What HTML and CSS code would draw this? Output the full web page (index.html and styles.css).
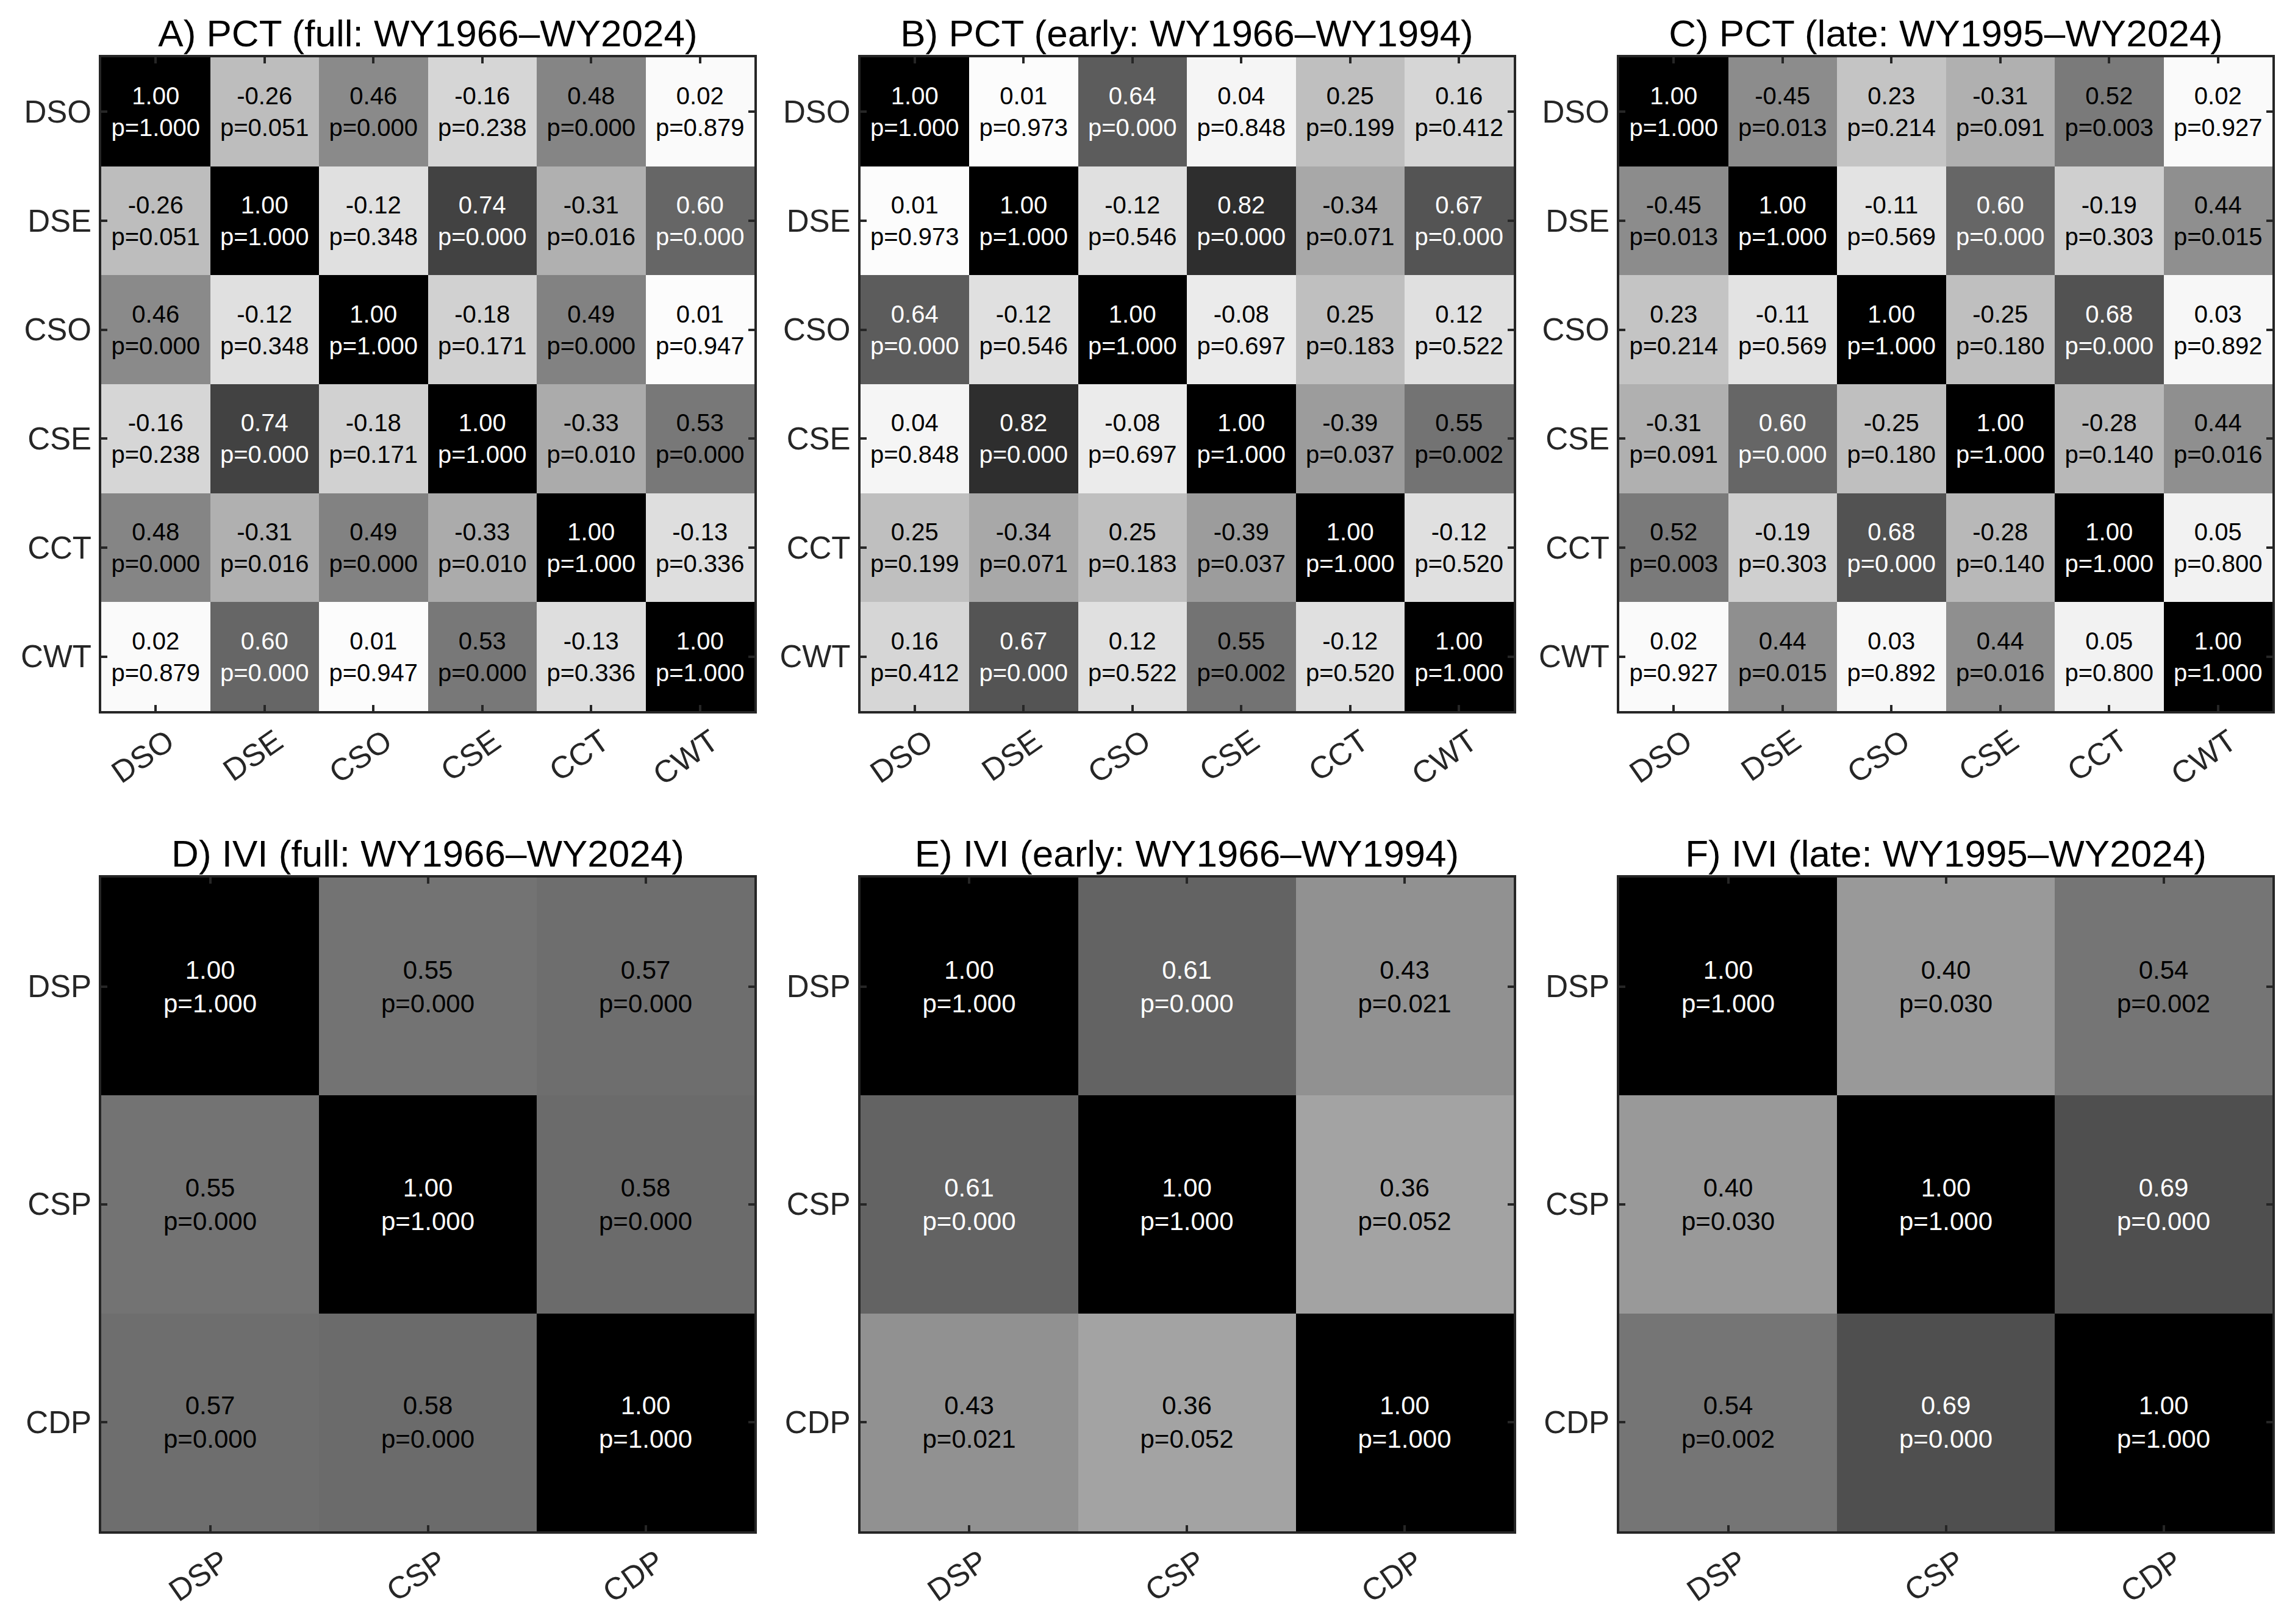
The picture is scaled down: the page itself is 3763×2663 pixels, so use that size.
FILE: index.html
```html
<!DOCTYPE html>
<html lang="en">
<head>
<meta charset="utf-8">
<title>Correlation matrices</title>
<link rel="stylesheet" href="styles.css">
</head>
<body>
<div class="page">

  <!-- A -->
  <section class="panel">
    <h2 class="title">A) PCT (full: WY1966–WY2024)</h2>
    <div class="ylabels"><span>DSO</span><span>DSE</span><span>CSO</span><span>CSE</span><span>CCT</span><span>CWT</span></div>
    <div class="box m6">
      <div class="c w" style="background:#000"><span>1.00</span><span>p=1.000</span></div>
      <div class="c" style="background:#bdbdbd"><span>-0.26</span><span>p=0.051</span></div>
      <div class="c" style="background:#8a8a8a"><span>0.46</span><span>p=0.000</span></div>
      <div class="c" style="background:#d6d6d6"><span>-0.16</span><span>p=0.238</span></div>
      <div class="c" style="background:#858585"><span>0.48</span><span>p=0.000</span></div>
      <div class="c" style="background:#fafafa"><span>0.02</span><span>p=0.879</span></div>

      <div class="c" style="background:#bdbdbd"><span>-0.26</span><span>p=0.051</span></div>
      <div class="c w" style="background:#000"><span>1.00</span><span>p=1.000</span></div>
      <div class="c" style="background:#e0e0e0"><span>-0.12</span><span>p=0.348</span></div>
      <div class="c w" style="background:#424242"><span>0.74</span><span>p=0.000</span></div>
      <div class="c" style="background:#b0b0b0"><span>-0.31</span><span>p=0.016</span></div>
      <div class="c w" style="background:#666666"><span>0.60</span><span>p=0.000</span></div>

      <div class="c" style="background:#8a8a8a"><span>0.46</span><span>p=0.000</span></div>
      <div class="c" style="background:#e0e0e0"><span>-0.12</span><span>p=0.348</span></div>
      <div class="c w" style="background:#000"><span>1.00</span><span>p=1.000</span></div>
      <div class="c" style="background:#d1d1d1"><span>-0.18</span><span>p=0.171</span></div>
      <div class="c" style="background:#828282"><span>0.49</span><span>p=0.000</span></div>
      <div class="c" style="background:#fcfcfc"><span>0.01</span><span>p=0.947</span></div>

      <div class="c" style="background:#d6d6d6"><span>-0.16</span><span>p=0.238</span></div>
      <div class="c w" style="background:#424242"><span>0.74</span><span>p=0.000</span></div>
      <div class="c" style="background:#d1d1d1"><span>-0.18</span><span>p=0.171</span></div>
      <div class="c w" style="background:#000"><span>1.00</span><span>p=1.000</span></div>
      <div class="c" style="background:#ababab"><span>-0.33</span><span>p=0.010</span></div>
      <div class="c" style="background:#787878"><span>0.53</span><span>p=0.000</span></div>

      <div class="c" style="background:#858585"><span>0.48</span><span>p=0.000</span></div>
      <div class="c" style="background:#b0b0b0"><span>-0.31</span><span>p=0.016</span></div>
      <div class="c" style="background:#828282"><span>0.49</span><span>p=0.000</span></div>
      <div class="c" style="background:#ababab"><span>-0.33</span><span>p=0.010</span></div>
      <div class="c w" style="background:#000"><span>1.00</span><span>p=1.000</span></div>
      <div class="c" style="background:#dedede"><span>-0.13</span><span>p=0.336</span></div>

      <div class="c" style="background:#fafafa"><span>0.02</span><span>p=0.879</span></div>
      <div class="c w" style="background:#666666"><span>0.60</span><span>p=0.000</span></div>
      <div class="c" style="background:#fcfcfc"><span>0.01</span><span>p=0.947</span></div>
      <div class="c" style="background:#787878"><span>0.53</span><span>p=0.000</span></div>
      <div class="c" style="background:#dedede"><span>-0.13</span><span>p=0.336</span></div>
      <div class="c w" style="background:#000"><span>1.00</span><span>p=1.000</span></div>
    </div>
    <div class="xlabels">
      <div class="xc"><div class="xa"><span class="xt">DSO</span></div></div>
      <div class="xc"><div class="xa"><span class="xt">DSE</span></div></div>
      <div class="xc"><div class="xa"><span class="xt">CSO</span></div></div>
      <div class="xc"><div class="xa"><span class="xt">CSE</span></div></div>
      <div class="xc"><div class="xa"><span class="xt">CCT</span></div></div>
      <div class="xc"><div class="xa"><span class="xt">CWT</span></div></div>
    </div>
  </section>

  <!-- B -->
  <section class="panel">
    <h2 class="title">B) PCT (early: WY1966–WY1994)</h2>
    <div class="ylabels"><span>DSO</span><span>DSE</span><span>CSO</span><span>CSE</span><span>CCT</span><span>CWT</span></div>
    <div class="box m6">
      <div class="c w" style="background:#000"><span>1.00</span><span>p=1.000</span></div>
      <div class="c" style="background:#fcfcfc"><span>0.01</span><span>p=0.973</span></div>
      <div class="c w" style="background:#5c5c5c"><span>0.64</span><span>p=0.000</span></div>
      <div class="c" style="background:#f5f5f5"><span>0.04</span><span>p=0.848</span></div>
      <div class="c" style="background:#bfbfbf"><span>0.25</span><span>p=0.199</span></div>
      <div class="c" style="background:#d6d6d6"><span>0.16</span><span>p=0.412</span></div>

      <div class="c" style="background:#fcfcfc"><span>0.01</span><span>p=0.973</span></div>
      <div class="c w" style="background:#000"><span>1.00</span><span>p=1.000</span></div>
      <div class="c" style="background:#e0e0e0"><span>-0.12</span><span>p=0.546</span></div>
      <div class="c w" style="background:#2e2e2e"><span>0.82</span><span>p=0.000</span></div>
      <div class="c" style="background:#a8a8a8"><span>-0.34</span><span>p=0.071</span></div>
      <div class="c w" style="background:#545454"><span>0.67</span><span>p=0.000</span></div>

      <div class="c w" style="background:#5c5c5c"><span>0.64</span><span>p=0.000</span></div>
      <div class="c" style="background:#e0e0e0"><span>-0.12</span><span>p=0.546</span></div>
      <div class="c w" style="background:#000"><span>1.00</span><span>p=1.000</span></div>
      <div class="c" style="background:#ebebeb"><span>-0.08</span><span>p=0.697</span></div>
      <div class="c" style="background:#bfbfbf"><span>0.25</span><span>p=0.183</span></div>
      <div class="c" style="background:#e0e0e0"><span>0.12</span><span>p=0.522</span></div>

      <div class="c" style="background:#f5f5f5"><span>0.04</span><span>p=0.848</span></div>
      <div class="c w" style="background:#2e2e2e"><span>0.82</span><span>p=0.000</span></div>
      <div class="c" style="background:#ebebeb"><span>-0.08</span><span>p=0.697</span></div>
      <div class="c w" style="background:#000"><span>1.00</span><span>p=1.000</span></div>
      <div class="c" style="background:#9c9c9c"><span>-0.39</span><span>p=0.037</span></div>
      <div class="c" style="background:#737373"><span>0.55</span><span>p=0.002</span></div>

      <div class="c" style="background:#bfbfbf"><span>0.25</span><span>p=0.199</span></div>
      <div class="c" style="background:#a8a8a8"><span>-0.34</span><span>p=0.071</span></div>
      <div class="c" style="background:#bfbfbf"><span>0.25</span><span>p=0.183</span></div>
      <div class="c" style="background:#9c9c9c"><span>-0.39</span><span>p=0.037</span></div>
      <div class="c w" style="background:#000"><span>1.00</span><span>p=1.000</span></div>
      <div class="c" style="background:#e0e0e0"><span>-0.12</span><span>p=0.520</span></div>

      <div class="c" style="background:#d6d6d6"><span>0.16</span><span>p=0.412</span></div>
      <div class="c w" style="background:#545454"><span>0.67</span><span>p=0.000</span></div>
      <div class="c" style="background:#e0e0e0"><span>0.12</span><span>p=0.522</span></div>
      <div class="c" style="background:#737373"><span>0.55</span><span>p=0.002</span></div>
      <div class="c" style="background:#e0e0e0"><span>-0.12</span><span>p=0.520</span></div>
      <div class="c w" style="background:#000"><span>1.00</span><span>p=1.000</span></div>
    </div>
    <div class="xlabels">
      <div class="xc"><div class="xa"><span class="xt">DSO</span></div></div>
      <div class="xc"><div class="xa"><span class="xt">DSE</span></div></div>
      <div class="xc"><div class="xa"><span class="xt">CSO</span></div></div>
      <div class="xc"><div class="xa"><span class="xt">CSE</span></div></div>
      <div class="xc"><div class="xa"><span class="xt">CCT</span></div></div>
      <div class="xc"><div class="xa"><span class="xt">CWT</span></div></div>
    </div>
  </section>

  <!-- C -->
  <section class="panel">
    <h2 class="title">C) PCT (late: WY1995–WY2024)</h2>
    <div class="ylabels"><span>DSO</span><span>DSE</span><span>CSO</span><span>CSE</span><span>CCT</span><span>CWT</span></div>
    <div class="box m6">
      <div class="c w" style="background:#000"><span>1.00</span><span>p=1.000</span></div>
      <div class="c" style="background:#8c8c8c"><span>-0.45</span><span>p=0.013</span></div>
      <div class="c" style="background:#c4c4c4"><span>0.23</span><span>p=0.214</span></div>
      <div class="c" style="background:#b0b0b0"><span>-0.31</span><span>p=0.091</span></div>
      <div class="c" style="background:#7a7a7a"><span>0.52</span><span>p=0.003</span></div>
      <div class="c" style="background:#fafafa"><span>0.02</span><span>p=0.927</span></div>

      <div class="c" style="background:#8c8c8c"><span>-0.45</span><span>p=0.013</span></div>
      <div class="c w" style="background:#000"><span>1.00</span><span>p=1.000</span></div>
      <div class="c" style="background:#e3e3e3"><span>-0.11</span><span>p=0.569</span></div>
      <div class="c w" style="background:#666666"><span>0.60</span><span>p=0.000</span></div>
      <div class="c" style="background:#cfcfcf"><span>-0.19</span><span>p=0.303</span></div>
      <div class="c" style="background:#8f8f8f"><span>0.44</span><span>p=0.015</span></div>

      <div class="c" style="background:#c4c4c4"><span>0.23</span><span>p=0.214</span></div>
      <div class="c" style="background:#e3e3e3"><span>-0.11</span><span>p=0.569</span></div>
      <div class="c w" style="background:#000"><span>1.00</span><span>p=1.000</span></div>
      <div class="c" style="background:#bfbfbf"><span>-0.25</span><span>p=0.180</span></div>
      <div class="c w" style="background:#525252"><span>0.68</span><span>p=0.000</span></div>
      <div class="c" style="background:#f7f7f7"><span>0.03</span><span>p=0.892</span></div>

      <div class="c" style="background:#b0b0b0"><span>-0.31</span><span>p=0.091</span></div>
      <div class="c w" style="background:#666666"><span>0.60</span><span>p=0.000</span></div>
      <div class="c" style="background:#bfbfbf"><span>-0.25</span><span>p=0.180</span></div>
      <div class="c w" style="background:#000"><span>1.00</span><span>p=1.000</span></div>
      <div class="c" style="background:#b8b8b8"><span>-0.28</span><span>p=0.140</span></div>
      <div class="c" style="background:#8f8f8f"><span>0.44</span><span>p=0.016</span></div>

      <div class="c" style="background:#7a7a7a"><span>0.52</span><span>p=0.003</span></div>
      <div class="c" style="background:#cfcfcf"><span>-0.19</span><span>p=0.303</span></div>
      <div class="c w" style="background:#525252"><span>0.68</span><span>p=0.000</span></div>
      <div class="c" style="background:#b8b8b8"><span>-0.28</span><span>p=0.140</span></div>
      <div class="c w" style="background:#000"><span>1.00</span><span>p=1.000</span></div>
      <div class="c" style="background:#f2f2f2"><span>0.05</span><span>p=0.800</span></div>

      <div class="c" style="background:#fafafa"><span>0.02</span><span>p=0.927</span></div>
      <div class="c" style="background:#8f8f8f"><span>0.44</span><span>p=0.015</span></div>
      <div class="c" style="background:#f7f7f7"><span>0.03</span><span>p=0.892</span></div>
      <div class="c" style="background:#8f8f8f"><span>0.44</span><span>p=0.016</span></div>
      <div class="c" style="background:#f2f2f2"><span>0.05</span><span>p=0.800</span></div>
      <div class="c w" style="background:#000"><span>1.00</span><span>p=1.000</span></div>
    </div>
    <div class="xlabels">
      <div class="xc"><div class="xa"><span class="xt">DSO</span></div></div>
      <div class="xc"><div class="xa"><span class="xt">DSE</span></div></div>
      <div class="xc"><div class="xa"><span class="xt">CSO</span></div></div>
      <div class="xc"><div class="xa"><span class="xt">CSE</span></div></div>
      <div class="xc"><div class="xa"><span class="xt">CCT</span></div></div>
      <div class="xc"><div class="xa"><span class="xt">CWT</span></div></div>
    </div>
  </section>

  <!-- D -->
  <section class="panel">
    <h2 class="title">D) IVI (full: WY1966–WY2024)</h2>
    <div class="ylabels"><span>DSP</span><span>CSP</span><span>CDP</span></div>
    <div class="box m3">
      <div class="c w" style="background:#000"><span>1.00</span><span>p=1.000</span></div>
      <div class="c" style="background:#737373"><span>0.55</span><span>p=0.000</span></div>
      <div class="c" style="background:#6e6e6e"><span>0.57</span><span>p=0.000</span></div>

      <div class="c" style="background:#737373"><span>0.55</span><span>p=0.000</span></div>
      <div class="c w" style="background:#000"><span>1.00</span><span>p=1.000</span></div>
      <div class="c" style="background:#6b6b6b"><span>0.58</span><span>p=0.000</span></div>

      <div class="c" style="background:#6e6e6e"><span>0.57</span><span>p=0.000</span></div>
      <div class="c" style="background:#6b6b6b"><span>0.58</span><span>p=0.000</span></div>
      <div class="c w" style="background:#000"><span>1.00</span><span>p=1.000</span></div>
    </div>
    <div class="xlabels">
      <div class="xc"><div class="xa"><span class="xt">DSP</span></div></div>
      <div class="xc"><div class="xa"><span class="xt">CSP</span></div></div>
      <div class="xc"><div class="xa"><span class="xt">CDP</span></div></div>
    </div>
  </section>

  <!-- E -->
  <section class="panel">
    <h2 class="title">E) IVI (early: WY1966–WY1994)</h2>
    <div class="ylabels"><span>DSP</span><span>CSP</span><span>CDP</span></div>
    <div class="box m3">
      <div class="c w" style="background:#000"><span>1.00</span><span>p=1.000</span></div>
      <div class="c w" style="background:#636363"><span>0.61</span><span>p=0.000</span></div>
      <div class="c" style="background:#919191"><span>0.43</span><span>p=0.021</span></div>

      <div class="c w" style="background:#636363"><span>0.61</span><span>p=0.000</span></div>
      <div class="c w" style="background:#000"><span>1.00</span><span>p=1.000</span></div>
      <div class="c" style="background:#a3a3a3"><span>0.36</span><span>p=0.052</span></div>

      <div class="c" style="background:#919191"><span>0.43</span><span>p=0.021</span></div>
      <div class="c" style="background:#a3a3a3"><span>0.36</span><span>p=0.052</span></div>
      <div class="c w" style="background:#000"><span>1.00</span><span>p=1.000</span></div>
    </div>
    <div class="xlabels">
      <div class="xc"><div class="xa"><span class="xt">DSP</span></div></div>
      <div class="xc"><div class="xa"><span class="xt">CSP</span></div></div>
      <div class="xc"><div class="xa"><span class="xt">CDP</span></div></div>
    </div>
  </section>

  <!-- F -->
  <section class="panel">
    <h2 class="title">F) IVI (late: WY1995–WY2024)</h2>
    <div class="ylabels"><span>DSP</span><span>CSP</span><span>CDP</span></div>
    <div class="box m3">
      <div class="c w" style="background:#000"><span>1.00</span><span>p=1.000</span></div>
      <div class="c" style="background:#999999"><span>0.40</span><span>p=0.030</span></div>
      <div class="c" style="background:#757575"><span>0.54</span><span>p=0.002</span></div>

      <div class="c" style="background:#999999"><span>0.40</span><span>p=0.030</span></div>
      <div class="c w" style="background:#000"><span>1.00</span><span>p=1.000</span></div>
      <div class="c w" style="background:#4f4f4f"><span>0.69</span><span>p=0.000</span></div>

      <div class="c" style="background:#757575"><span>0.54</span><span>p=0.002</span></div>
      <div class="c w" style="background:#4f4f4f"><span>0.69</span><span>p=0.000</span></div>
      <div class="c w" style="background:#000"><span>1.00</span><span>p=1.000</span></div>
    </div>
    <div class="xlabels">
      <div class="xc"><div class="xa"><span class="xt">DSP</span></div></div>
      <div class="xc"><div class="xa"><span class="xt">CSP</span></div></div>
      <div class="xc"><div class="xa"><span class="xt">CDP</span></div></div>
    </div>
  </section>

</div>
</body>
</html>
```

FILE: styles.css
```css
html, body {
  margin: 0;
  padding: 0;
  background: #ffffff;
}

body {
  width: 3763px;
  height: 2663px;
  overflow: hidden;
  font-family: "Liberation Sans", Arial, Helvetica, sans-serif;
}

.page {
  display: grid;
  grid-template-columns: repeat(3, 1241px);
  column-gap: 3.5px;
  padding-top: 20px;
}

.panel {
  display: grid;
  grid-template-columns: 162px 1079px;
  grid-template-rows: 70px 1080px 195px;
}

.title {
  grid-column: 2;
  grid-row: 1;
  margin: 0;
  font-size: 62px;
  font-weight: normal;
  line-height: 70px;
  text-align: center;
  white-space: nowrap;
  color: #000;
}

.ylabels {
  grid-column: 1;
  grid-row: 2;
  display: flex;
  flex-direction: column;
  padding: 4px 12px 4px 0;
  font-size: 51px;
  color: #262626;
}

.ylabels span {
  flex: 1;
  display: flex;
  align-items: center;
  justify-content: flex-end;
  white-space: nowrap;
}

.box {
  grid-column: 2;
  grid-row: 2;
  box-sizing: border-box;
  width: 1079px;
  height: 1080px;
  border: 4px solid #262626;
  display: grid;
}

.m6 {
  grid-template-columns: repeat(6, 1fr);
  grid-template-rows: repeat(6, 1fr);
}

.m3 {
  grid-template-columns: repeat(3, 1fr);
  grid-template-rows: repeat(3, 1fr);
}

.c {
  position: relative;
  display: flex;
  flex-direction: column;
  align-items: center;
  justify-content: center;
  color: #000;
  white-space: nowrap;
}

.m6 .c {
  font-size: 40px;
  line-height: 52px;
}

.m3 .c {
  font-size: 42px;
  line-height: 55px;
}

.c.w {
  color: #fff;
}

/* tick marks (inward), drawn over the cells on the box edges */
.c::before,
.c::after {
  position: absolute;
  background: #262626;
}

.m6 .c:nth-child(-n+6)::before,
.m3 .c:nth-child(-n+3)::before {
  content: "";
  top: 0;
  left: 50%;
  width: 4px;
  height: 10px;
  margin-left: -2px;
}

.m6 .c:nth-child(n+31)::before,
.m3 .c:nth-child(n+7)::before {
  content: "";
  bottom: 0;
  left: 50%;
  width: 4px;
  height: 10px;
  margin-left: -2px;
}

.m6 .c:nth-child(6n+1)::after,
.m3 .c:nth-child(3n+1)::after {
  content: "";
  left: 0;
  top: 50%;
  width: 10px;
  height: 4px;
  margin-top: -2px;
}

.m6 .c:nth-child(6n)::after,
.m3 .c:nth-child(3n)::after {
  content: "";
  right: 0;
  top: 50%;
  width: 10px;
  height: 4px;
  margin-top: -2px;
}

.xlabels {
  grid-column: 2;
  grid-row: 3;
  display: flex;
  padding: 0 4px;
  font-size: 51px;
  color: #262626;
}

.xc {
  flex: 1;
  display: flex;
}

.xa {
  width: calc(50% + 24px);
  flex: none;
  display: flex;
  justify-content: flex-end;
  align-items: flex-start;
}

.xt {
  display: block;
  margin-top: 10px;
  line-height: 58px;
  white-space: nowrap;
  transform-origin: 100% 50%;
  transform: rotate(-35deg);
}
```
